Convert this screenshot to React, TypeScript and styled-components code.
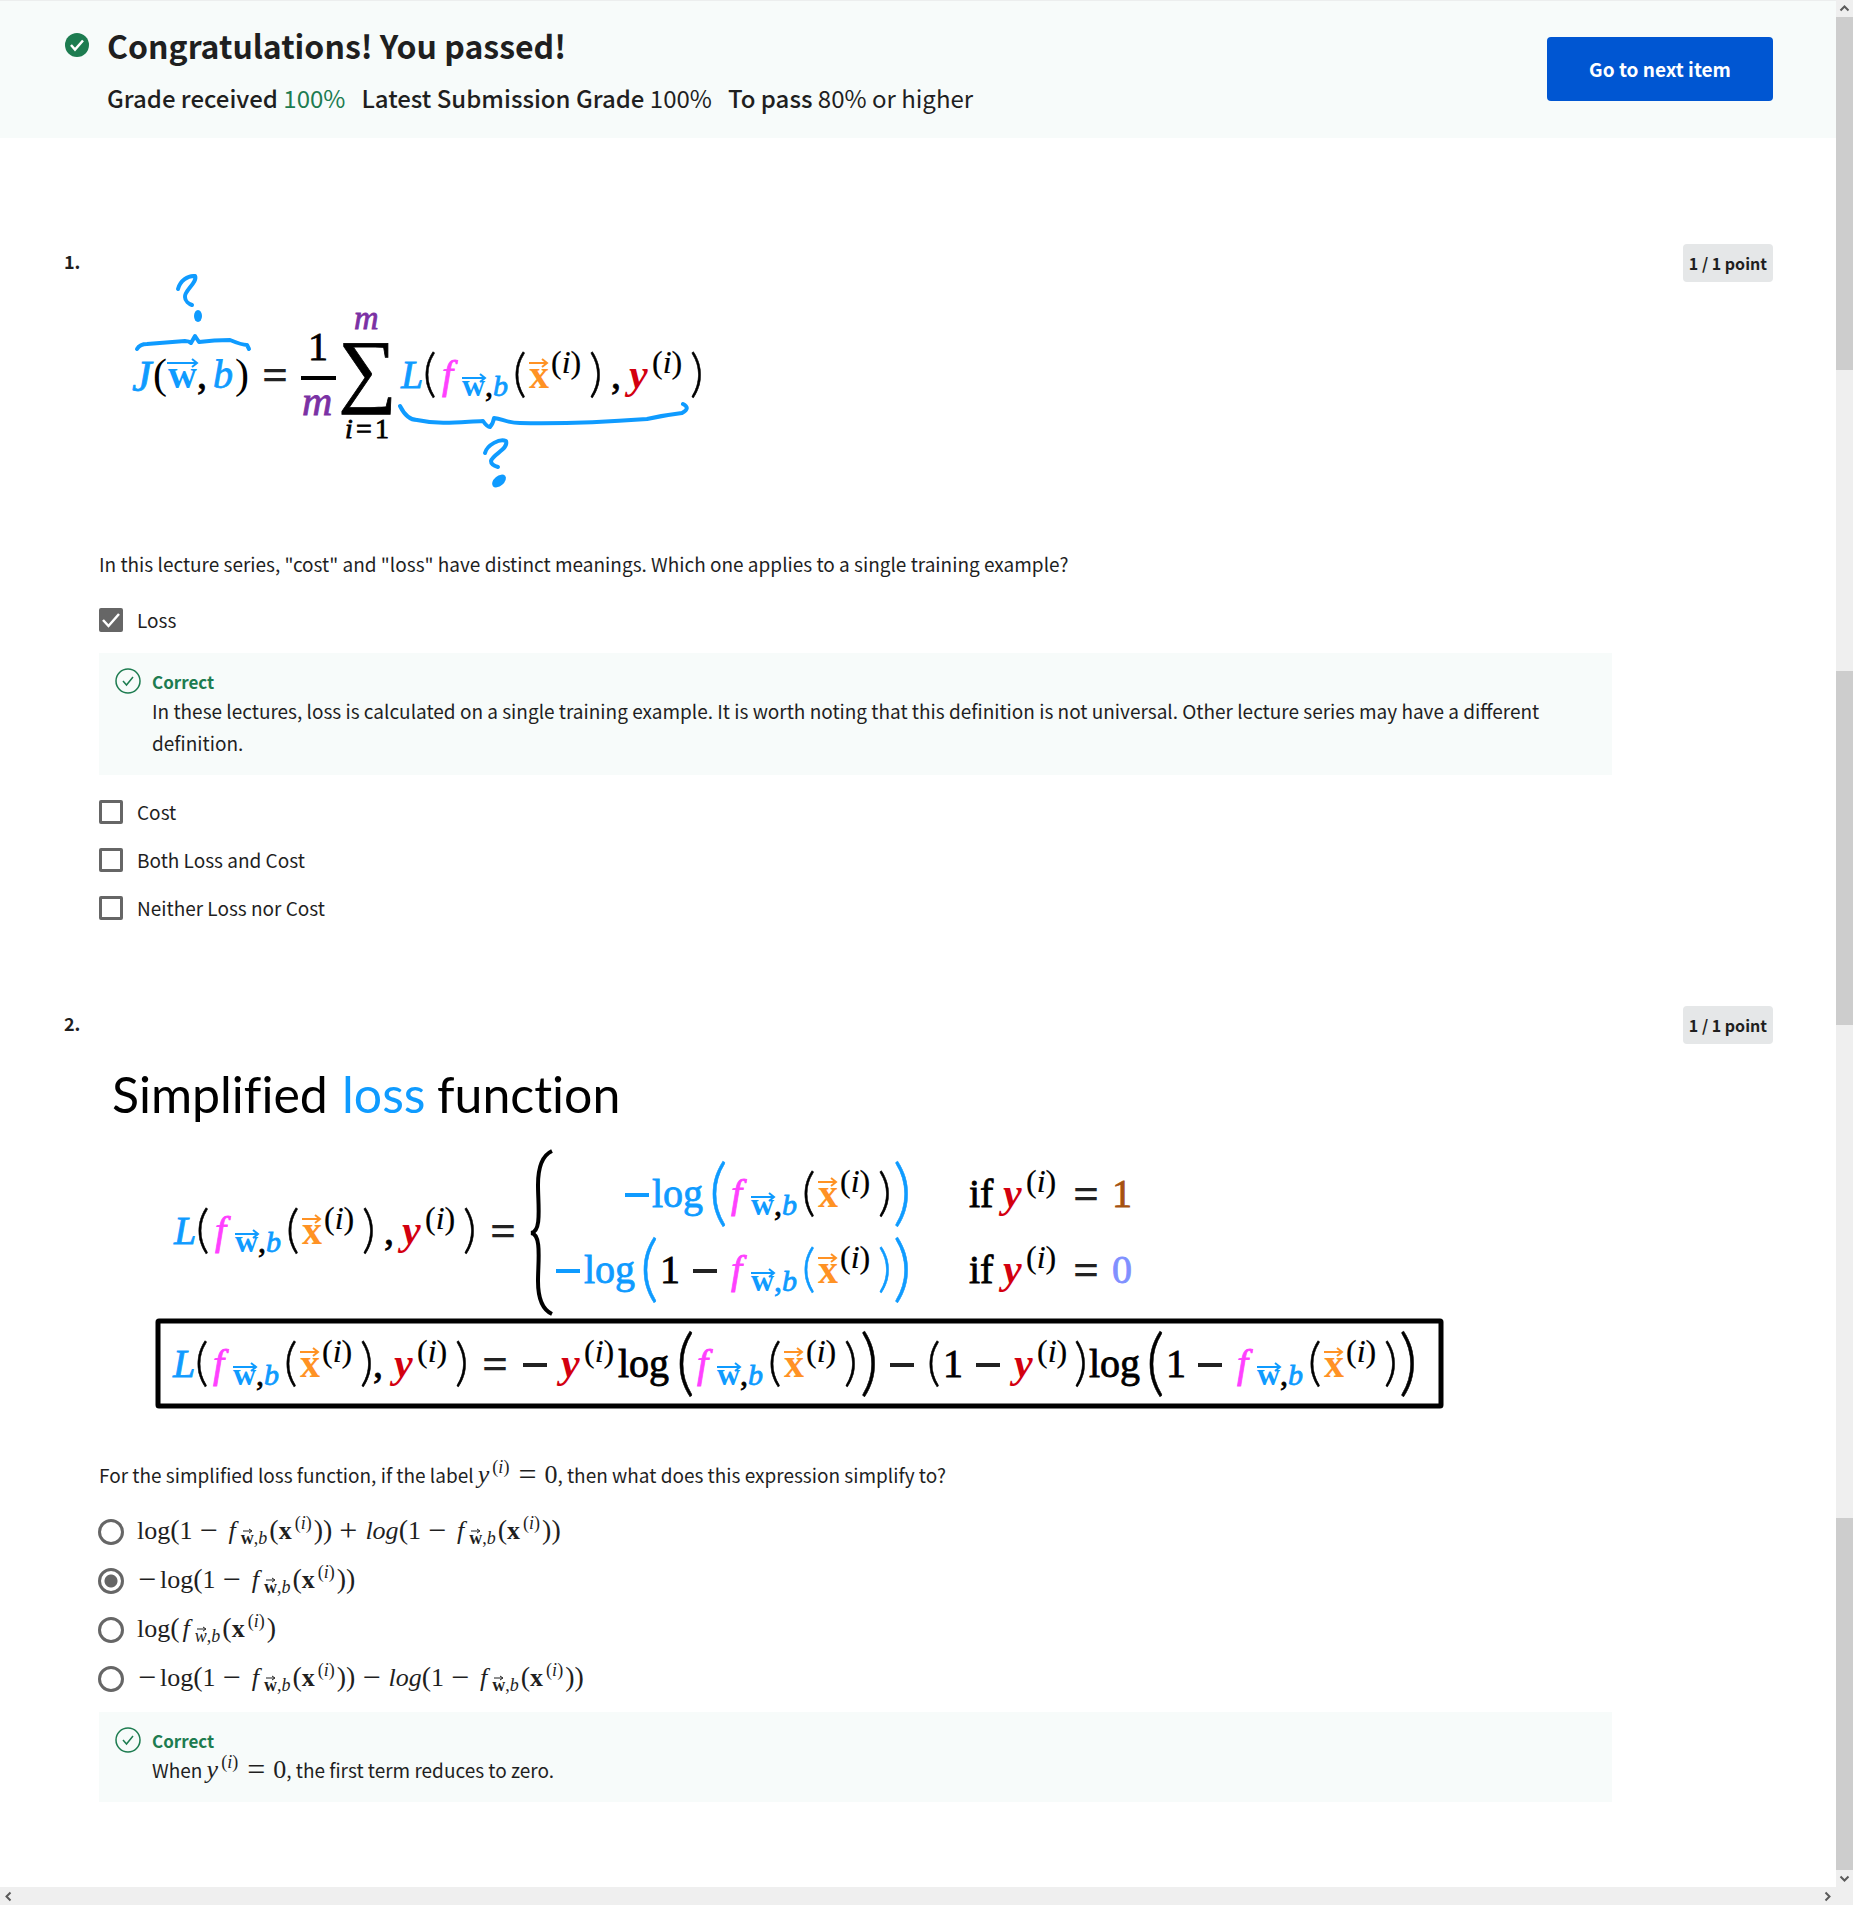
import React from 'react';
import styled, { createGlobalStyle, css } from 'styled-components';

const sans = '"Noto Sans CJK SC", "Open Sans", sans-serif';
const serif = '"Liberation Serif", "Times New Roman", serif';
const ink = '#1f1f1f';
const green = '#1d7c50';
const mint = '#f7fbfa';
const blue = '#0f9bff';
const pink = '#ff40ff';
const orange = '#ff9224';
const red = '#d3000f';
const purple = '#7b31a4';

const GlobalStyle = createGlobalStyle`
  * { box-sizing: border-box; }
  body { margin: 0; background: #fff; color: ${ink}; font-family: ${sans}; font-size: 19px; }
`;

/* ---------- page frame ---------- */

const Frame = styled.div`
  display: grid;
  grid-template-columns: minmax(0, 1fr) 17px;
  grid-template-rows: 1fr 18px;
  min-height: 100vh;
`;

const Page = styled.div`
  min-width: 0;
`;

const VerticalBar = styled.div`
  display: flex;
  flex-direction: column;
  background: #efefef;
`;

const Track = styled.div<{ $share: number; $thumb?: boolean }>`
  flex: ${(p) => p.$share} 1 0;
  background: ${(p) => (p.$thumb ? '#cdcdcd' : '#efefef')};
`;

const HorizontalBar = styled.div`
  grid-column: 1 / -1;
  display: flex;
  align-items: center;
  justify-content: space-between;
  padding-right: 17px;
  background: #efefef;
`;

const ArrowBox = styled.span`
  display: flex;
  align-items: center;
  justify-content: center;
  width: 17px;
  height: 17px;
`;

const turns = { up: 0, right: 90, down: 180, left: 270 };

function Arrow({ to }: { to: keyof typeof turns }) {
  return (
    <ArrowBox>
      <svg width="11" height="11" viewBox="0 0 11 11" aria-hidden="true">
        <path
          d="M1.5 7.5 5.5 3.5l4 4"
          fill="none"
          stroke="#5a5a5a"
          strokeWidth="2"
          transform={`rotate(${turns[to]} 5.5 5.5)`}
        />
      </svg>
    </ArrowBox>
  );
}

/* ---------- header ---------- */

const Header = styled.header`
  display: flex;
  align-items: flex-start;
  justify-content: space-between;
  height: 138px;
  padding: 19px 63px 0 64px;
  background: ${mint};
  border-top: 1px solid #eceeee;
`;

const Result = styled.div`
  display: grid;
  grid-template-columns: 26px 1fr;
  column-gap: 17px;
  align-items: center;
`;

const Title = styled.h1`
  margin: 0;
  font-size: 32px;
  line-height: 50px;
  font-weight: 700;
`;

const Grades = styled.p`
  grid-column: 2;
  display: flex;
  gap: 16px;
  margin: 0;
  font-size: 24px;
  line-height: 56px;

  b { font-weight: 500; }
`;

const Passed = styled.span`
  color: ${green};
`;

const NextButton = styled.button`
  width: 226px;
  height: 64px;
  margin-top: 17px;
  border: 0;
  border-radius: 4px;
  background: #0056d2;
  color: #fff;
  font: 700 19px/24px ${sans};
`;

/* ---------- questions ---------- */

const Questions = styled.main`
  display: flex;
  flex-direction: column;
  gap: 74px;
  padding: 106px 63px 60px 64px;
`;

const Question = styled.section`
  display: grid;
  grid-template-columns: 35px minmax(0, 1fr) 161px;
  align-items: start;
`;

const Number = styled.h2`
  margin: 0;
  font-size: 18px;
  line-height: 34px;
  font-weight: 700;
`;

const Points = styled.span`
  justify-self: end;
  padding: 0 6px;
  border-radius: 4px;
  background: #e5e7e8;
  font-size: 16px;
  line-height: 38px;
  font-weight: 700;
`;

const Figure = styled.svg`
  display: block;
  max-width: 100%;
  margin-bottom: 14px;
`;

const Prompt = styled.p`
  margin: 0 0 16px;
  line-height: 32px;
`;

const Option = styled.label<{ $tall?: boolean }>`
  display: flex;
  align-items: center;
  gap: 14px;
  height: ${(p) => (p.$tall ? 49 : 48)}px;
`;

const OptionText = styled.span`
  padding-bottom: 2px;
`;

const Control = styled.span`
  position: relative;
  display: flex;
  width: 24px;
  height: 24px;

  svg {
    position: absolute;
    inset: 0;
    pointer-events: none;
  }
`;

const control = css`
  appearance: none;
  flex: none;
  width: 24px;
  height: 24px;
  margin: 0;
  border: 3px solid #666;
  background: #fff;
`;

const Checkbox = styled.input`
  ${control}
  border-radius: 2px;
  &:checked { background: #666; }
`;

const Radio = styled.input`
  ${control}
  width: 26px;
  height: 26px;
  margin: -1px;
  border-radius: 50%;
  &:checked { background: radial-gradient(circle, #666 6px, #fff 7px); }
`;

const Feedback = styled.div`
  display: grid;
  grid-template-columns: 26px 1fr;
  column-gap: 11px;
  margin: 9px 0 13px;
  padding: 15px 16px 16px;
  background: ${mint};
`;

const Verdict = styled.strong`
  color: ${green};
  font-size: 17px;
  line-height: 27px;
`;

const Explanation = styled.p`
  grid-column: 2;
  margin: 0;
  line-height: 32px;
`;

function FilledCheck() {
  return (
    <svg width="26" height="26" viewBox="0 0 26 26" aria-hidden="true">
      <circle cx="13" cy="13" r="12" fill={green} />
      <path d="m7 13 4 4.500 8-9" fill="none" stroke="#fff" strokeWidth="2.500" />
    </svg>
  );
}

function OutlinedCheck() {
  return (
    <svg width="26" height="26" viewBox="0 0 26 26" aria-hidden="true">
      <circle cx="13" cy="13" r="12" fill="none" stroke={green} strokeWidth="1.500" />
      <path d="m8 13 3.500 4 6.500-8" fill="none" stroke={green} strokeWidth="1.500" />
    </svg>
  );
}

function CheckOption({ text, checked }: { text: string; checked?: boolean }) {
  return (
    <Option>
      <Control>
        <Checkbox type="checkbox" defaultChecked={checked} />
        {checked && (
          <svg width="24" height="24" viewBox="0 0 24 24" aria-hidden="true">
            <path d="m4 12 5.500 6L20 6" fill="none" stroke="#fff" strokeWidth="2.500" />
          </svg>
        )}
      </Control>
      <OptionText>{text}</OptionText>
    </Option>
  );
}

function RadioOption({ checked, children }: { checked?: boolean; children: React.ReactNode }) {
  return (
    <Option $tall>
      <Control>
        <Radio type="radio" name="simplified" defaultChecked={checked} />
      </Control>
      <OptionText>
        <MathText>{children}</MathText>
      </OptionText>
    </Option>
  );
}

/* ---------- inline formulas ---------- */

const MathText = styled.span`
  font-family: ${serif};
  font-size: 26px;
  line-height: 32px;
  white-space: nowrap;

  sup, sub { font-size: 18px; line-height: 0; }
  sup { vertical-align: 10px; margin: 0 2px 0 3px; }
  sub { vertical-align: -5px; margin-right: 2px; }
`;

const Op = styled.span<{ $lead?: boolean }>`
  margin: 0 ${(p) => (p.$lead ? 4 : 8)}px 0 ${(p) => (p.$lead ? 1 : 7)}px;
  font-size: 32px;
  line-height: 0;
  vertical-align: -2px;
`;

const Paren = styled.span`
  font-size: 28px;
  line-height: 0;
`;

const Func = styled.i`
  margin: 0 5px 0 3px;
`;

const Vector = styled.span`
  position: relative;

  svg {
    position: absolute;
    left: 2px;
    top: 0;
  }
`;

const Label = () => (
  <sup>
    (<i>i</i>)
  </sup>
);

function YZero() {
  return (
    <MathText>
      <i>y</i>
      <Label />
      <Op>=</Op>0
    </MathText>
  );
}

function Model({ slanted }: { slanted?: boolean }) {
  return (
    <>
      <Func>f</Func>
      <sub>
        <Vector>
          {slanted ? <i>w</i> : <b>w</b>}
          <svg width="10" height="6" viewBox="0 0 10 6" aria-hidden="true">
            <path d="M0 3h8M6 1l3 2-3 2" fill="none" stroke={ink} />
          </svg>
        </Vector>
        ,<i>b</i>
      </sub>
      <Paren>(</Paren>
      <b>x</b>
      <Label />
      <Paren>)</Paren>
    </>
  );
}

const OneMinusModel = () => (
  <>
    <Paren>(</Paren>1<Op>−</Op>
    <Model />
    <Paren>)</Paren>
  </>
);

/* ---------- lecture slides ---------- */

type GlyphProps = {
  x: number;
  y: number;
  size?: number;
  weight?: number;
  fill?: string;
  italic?: boolean;
  bold?: boolean;
  children: React.ReactNode;
};

function T({ x, y, size = 40, weight = 0.8, fill = '#000', italic, bold, children }: GlyphProps) {
  return (
    <text
      x={x}
      y={y}
      fontFamily={serif}
      fontSize={size}
      fill={fill}
      stroke={fill}
      strokeWidth={bold ? 0 : weight}
      fontStyle={italic ? 'italic' : undefined}
      fontWeight={bold ? 700 : undefined}
    >
      {children}
    </text>
  );
}

type Spot = { x: number; y: number; fill?: string };

/* tall delimiters use the narrow cut so they stay thin at this height */
function Tall({ x, y, size, fill = '#000', children }: GlyphProps) {
  return (
    <text x={x} y={y} fontFamily="Lato, sans-serif" fontWeight={300} fontSize={size} fill={fill} stroke={fill} strokeWidth="0.5">
      {children}
    </text>
  );
}

const Open = ({ x, y, fill }: Spot) => <Tall x={x - 2} y={y + 3} size={52} fill={fill}>(</Tall>;
const Close = ({ x, y, fill }: Spot) => <Tall x={x + 1} y={y + 3} size={52} fill={fill}>)</Tall>;
const BigOpen = ({ x, y, fill }: Spot) => <Tall x={x - 4} y={y + 10} size={72} fill={fill}>(</Tall>;
const BigClose = ({ x, y, fill }: Spot) => <Tall x={x - 1} y={y + 10} size={72} fill={fill}>)</Tall>;
const Minus = ({ x, y, fill = '#222' }: Spot) => (
  <path d={`M${x} ${y - 12}h24`} stroke={fill} strokeWidth="4" />
);
const Equals = ({ x, y }: Spot) => <T x={x - 1} y={y + 2} size={46} bold fill="#222">=</T>;
const Sup = ({ x, y }: Spot) => (
  <T x={x - 1} y={y - 15} size={32} weight={0.2}>
    (<tspan fontStyle="italic">i</tspan>)
  </T>
);
const Over = ({ x, y, width }: { x: number; y: number; width: number }) => (
  <path d={`M${x} ${y}h${width}m-5-4 5 4-5 4`} />
);

/* f with its subscript, applied to the i-th input; x is the left edge of the f */
function SlideModel({ x, y, paren = '#000', comma = '#000' }: Spot & { paren?: string; comma?: string }) {
  return (
    <g>
      <T x={x + 3} y={y} fill={pink} italic>f</T>
      <T x={x + 23} y={y + 8} size={32} fill={blue} bold>w</T>
      <g fill="none" stroke={blue} strokeWidth="2">
        <Over x={x + 23} y={y - 10} width={23} />
      </g>
      <T x={x + 46} y={y + 8} size={32} fill={comma}>,</T>
      <T x={x + 54} y={y + 8} size={30} fill={blue} italic>b</T>
      <Open x={x + 76} y={y} fill={paren} />
      <T x={x + 90} y={y} fill={orange} bold>x</T>
      <g fill="none" stroke={orange} strokeWidth="2">
        <Over x={x + 90} y={y - 25} width={18} />
      </g>
      <Sup x={x + 113} y={y} />
      <Close x={x + 149} y={y} fill={paren} />
    </g>
  );
}

const Yi = ({ x, y }: Spot) => (
  <>
    <T x={x + 2} y={y} size={42} fill={red} italic bold>y</T>
    <Sup x={x + 26} y={y} />
  </>
);

function CostSlide() {
  return (
    <Figure width="640" height="290" viewBox="99 244 640 290" role="img" aria-label="Cost function">
      <g fill="none" stroke={blue} strokeWidth="4" strokeLinecap="round" strokeLinejoin="round">
        <path d="M178 289C180 281 188 275 195 276C198 282 184 291 185 297C185 301 189 304 192 305" />
        <path d="M137 349Q140 344 147 344L185 341Q189 341 191 343L195 336L199 342Q214 340 230 340Q242 345 247 345L249 349" />
        <path d="M400 406C405 416 411 420 417 420C440 425 460 422 483 421Q487 427 490 427Q493 424 494 418C503 419 507 423 520 423C570 424 620 421 647 419Q665 415 682 413Q691 408 683 404" />
        <path d="M485 453C487 445 500 438 506 441C509 449 493 454 491 461Q491 465 498 467" />
      </g>
      <ellipse cx="198" cy="316" rx="4" ry="6" fill={blue} />
      <ellipse cx="499" cy="481" rx="8" ry="5" fill={blue} transform="rotate(-40 499 481)" />

      <T x={132} y={391} size={44} fill={blue} italic>J</T>
      <T x={153} y={388} size={42} weight={0}>(</T>
      <T x={168} y={388} fill={blue} bold>w</T>
      <g fill="none" stroke={blue} strokeWidth="2">
        <Over x={167} y={363} width={30} />
      </g>
      <T x={197} y={388}>,</T>
      <T x={213} y={388} fill={blue} italic>b</T>
      <T x={235} y={388} size={42} weight={0}>)</T>
      <Equals x={263} y={388} />

      <T x={308} y={360}>1</T>
      <path d="M301 378h35" stroke="#000" strokeWidth="4" />
      <T x={302} y={415} size={42} fill={purple} italic>m</T>

      <T x={354} y={329} size={34} fill={purple} italic>m</T>
      <T x={338} y={397} size={82}>∑</T>
      <T x={345} y={438} size={28} italic>i</T>
      <T x={356} y={438} size={28}>=</T>
      <T x={375} y={438} size={28}>1</T>

      <T x={401} y={388} fill={blue} italic>L</T>
      <Open x={425} y={388} />
      <SlideModel x={439} y={388} />
      <T x={611} y={388}>,</T>
      <Yi x={627} y={388} />
      <Close x={689} y={388} />
    </Figure>
  );
}

const SlideTitle = styled.g`
  font-family: Lato, sans-serif;
  font-size: 50px;
  font-variant-ligatures: none;
`;

function LossSlide() {
  return (
    <Figure width="1360" height="439" viewBox="99 1006 1360 439" role="img" aria-label="Simplified loss function">
      <SlideTitle>
        <text x="112" y="1113">Simplified</text>
        <text x="342" y="1113" fill={blue}>loss</text>
        <text x="437" y="1113">function</text>
      </SlideTitle>

      <T x={174} y={1244} fill={blue} italic>L</T>
      <Open x={198} y={1244} />
      <SlideModel x={212} y={1244} />
      <T x={384} y={1244}>,</T>
      <Yi x={400} y={1244} />
      <Close x={462} y={1244} />
      <Equals x={491} y={1244} />
      <path
        d="M552 1151C541 1156 538 1170 538 1185C538 1205 542 1232 531 1233C542 1234 538 1262 538 1281C538 1296 541 1309 552 1314"
        fill="none"
        stroke="#000"
        strokeWidth="4"
      />

      <Minus x={625} y={1207} fill={blue} />
      <T x={652} y={1207} fill={blue}>log</T>
      <BigOpen x={713} y={1207} fill={blue} />
      <SlideModel x={728} y={1207} />
      <BigClose x={894} y={1207} fill={blue} />
      <T x={969} y={1207}>if</T>
      <Yi x={1001} y={1207} />
      <Equals x={1074} y={1207} />
      <T x={1112} y={1207} fill="#a5520f">1</T>

      <Minus x={556} y={1283} fill={blue} />
      <T x={584} y={1283} fill={blue}>log</T>
      <BigOpen x={644} y={1283} fill={blue} />
      <T x={660} y={1283}>1</T>
      <Minus x={693} y={1283} />
      <SlideModel x={728} y={1283} paren={blue} comma={blue} />
      <BigClose x={894} y={1283} fill={blue} />
      <T x={969} y={1283}>if</T>
      <Yi x={1001} y={1283} />
      <Equals x={1074} y={1283} />
      <T x={1112} y={1283} fill="#8090ff">0</T>

      <rect x="158" y="1321" width="1283" height="85" rx="1" fill="none" stroke="#000" strokeWidth="5" />
      <T x={173} y={1377} fill={blue} italic>L</T>
      <Open x={197} y={1377} />
      <SlideModel x={210} y={1377} />
      <T x={373} y={1377}>,</T>
      <Yi x={392} y={1377} />
      <Close x={454} y={1377} />
      <Equals x={483} y={1377} />
      <Minus x={523} y={1377} />
      <Yi x={559} y={1377} />
      <T x={618} y={1377}>log</T>
      <BigOpen x={680} y={1377} />
      <SlideModel x={694} y={1377} />
      <BigClose x={861} y={1377} />
      <Minus x={890} y={1377} />
      <Open x={929} y={1377} />
      <T x={943} y={1377}>1</T>
      <Minus x={976} y={1377} />
      <Yi x={1012} y={1377} />
      <Close x={1073} y={1377} />
      <T x={1089} y={1377}>log</T>
      <BigOpen x={1150} y={1377} />
      <T x={1166} y={1377}>1</T>
      <Minus x={1198} y={1377} />
      <SlideModel x={1234} y={1377} />
      <BigClose x={1400} y={1377} />
    </Figure>
  );
}

/* ---------- page ---------- */

export default function App() {
  return (
    <>
      <GlobalStyle />
      <Frame>
        <Page>
          <Header>
            <Result>
              <FilledCheck />
              <Title>Congratulations! You passed!</Title>
              <Grades>
                <span><b>Grade received</b> <Passed>100%</Passed></span>
                <span><b>Latest Submission Grade</b> 100%</span>
                <span><b>To pass</b> 80% or higher</span>
              </Grades>
            </Result>
            <NextButton type="button">Go to next item</NextButton>
          </Header>

          <Questions>
            <Question>
              <Number>1.</Number>
              <div>
                <CostSlide />
                <Prompt>
                  In this lecture series, "cost" and "loss" have distinct meanings. Which one applies to a single
                  training example?
                </Prompt>
                <CheckOption text="Loss" checked />
                <Feedback>
                  <OutlinedCheck />
                  <Verdict>Correct</Verdict>
                  <Explanation>
                    In these lectures, loss is calculated on a single training example. It is worth noting that this
                    definition is not universal. Other lecture series may have a different definition.
                  </Explanation>
                </Feedback>
                <CheckOption text="Cost" />
                <CheckOption text="Both Loss and Cost" />
                <CheckOption text="Neither Loss nor Cost" />
              </div>
              <Points>1 / 1 point</Points>
            </Question>

            <Question>
              <Number>2.</Number>
              <div>
                <LossSlide />
                <Prompt>
                  For the simplified loss function, if the label <YZero />, then what does this expression simplify to?
                </Prompt>
                <RadioOption>
                  log
                  <OneMinusModel />
                  <Op>+</Op>
                  <i>log</i>
                  <OneMinusModel />
                </RadioOption>
                <RadioOption checked>
                  <Op $lead>−</Op>log
                  <OneMinusModel />
                </RadioOption>
                <RadioOption>
                  log
                  <Paren>(</Paren>
                  <Model slanted />
                </RadioOption>
                <RadioOption>
                  <Op $lead>−</Op>log
                  <OneMinusModel />
                  <Op>−</Op>
                  <i>log</i>
                  <OneMinusModel />
                </RadioOption>
                <Feedback>
                  <OutlinedCheck />
                  <Verdict>Correct</Verdict>
                  <Explanation>
                    When <YZero />, the first term reduces to zero.
                  </Explanation>
                </Feedback>
              </div>
              <Points>1 / 1 point</Points>
            </Question>
          </Questions>
        </Page>

        <VerticalBar aria-hidden="true">
          <Arrow to="up" />
          <Track $share={353} $thumb />
          <Track $share={301} />
          <Track $share={354} $thumb />
          <Track $share={493} />
          <Track $share={352} $thumb />
          <Arrow to="down" />
        </VerticalBar>
        <HorizontalBar aria-hidden="true">
          <Arrow to="left" />
          <Arrow to="right" />
        </HorizontalBar>
      </Frame>
    </>
  );
}
